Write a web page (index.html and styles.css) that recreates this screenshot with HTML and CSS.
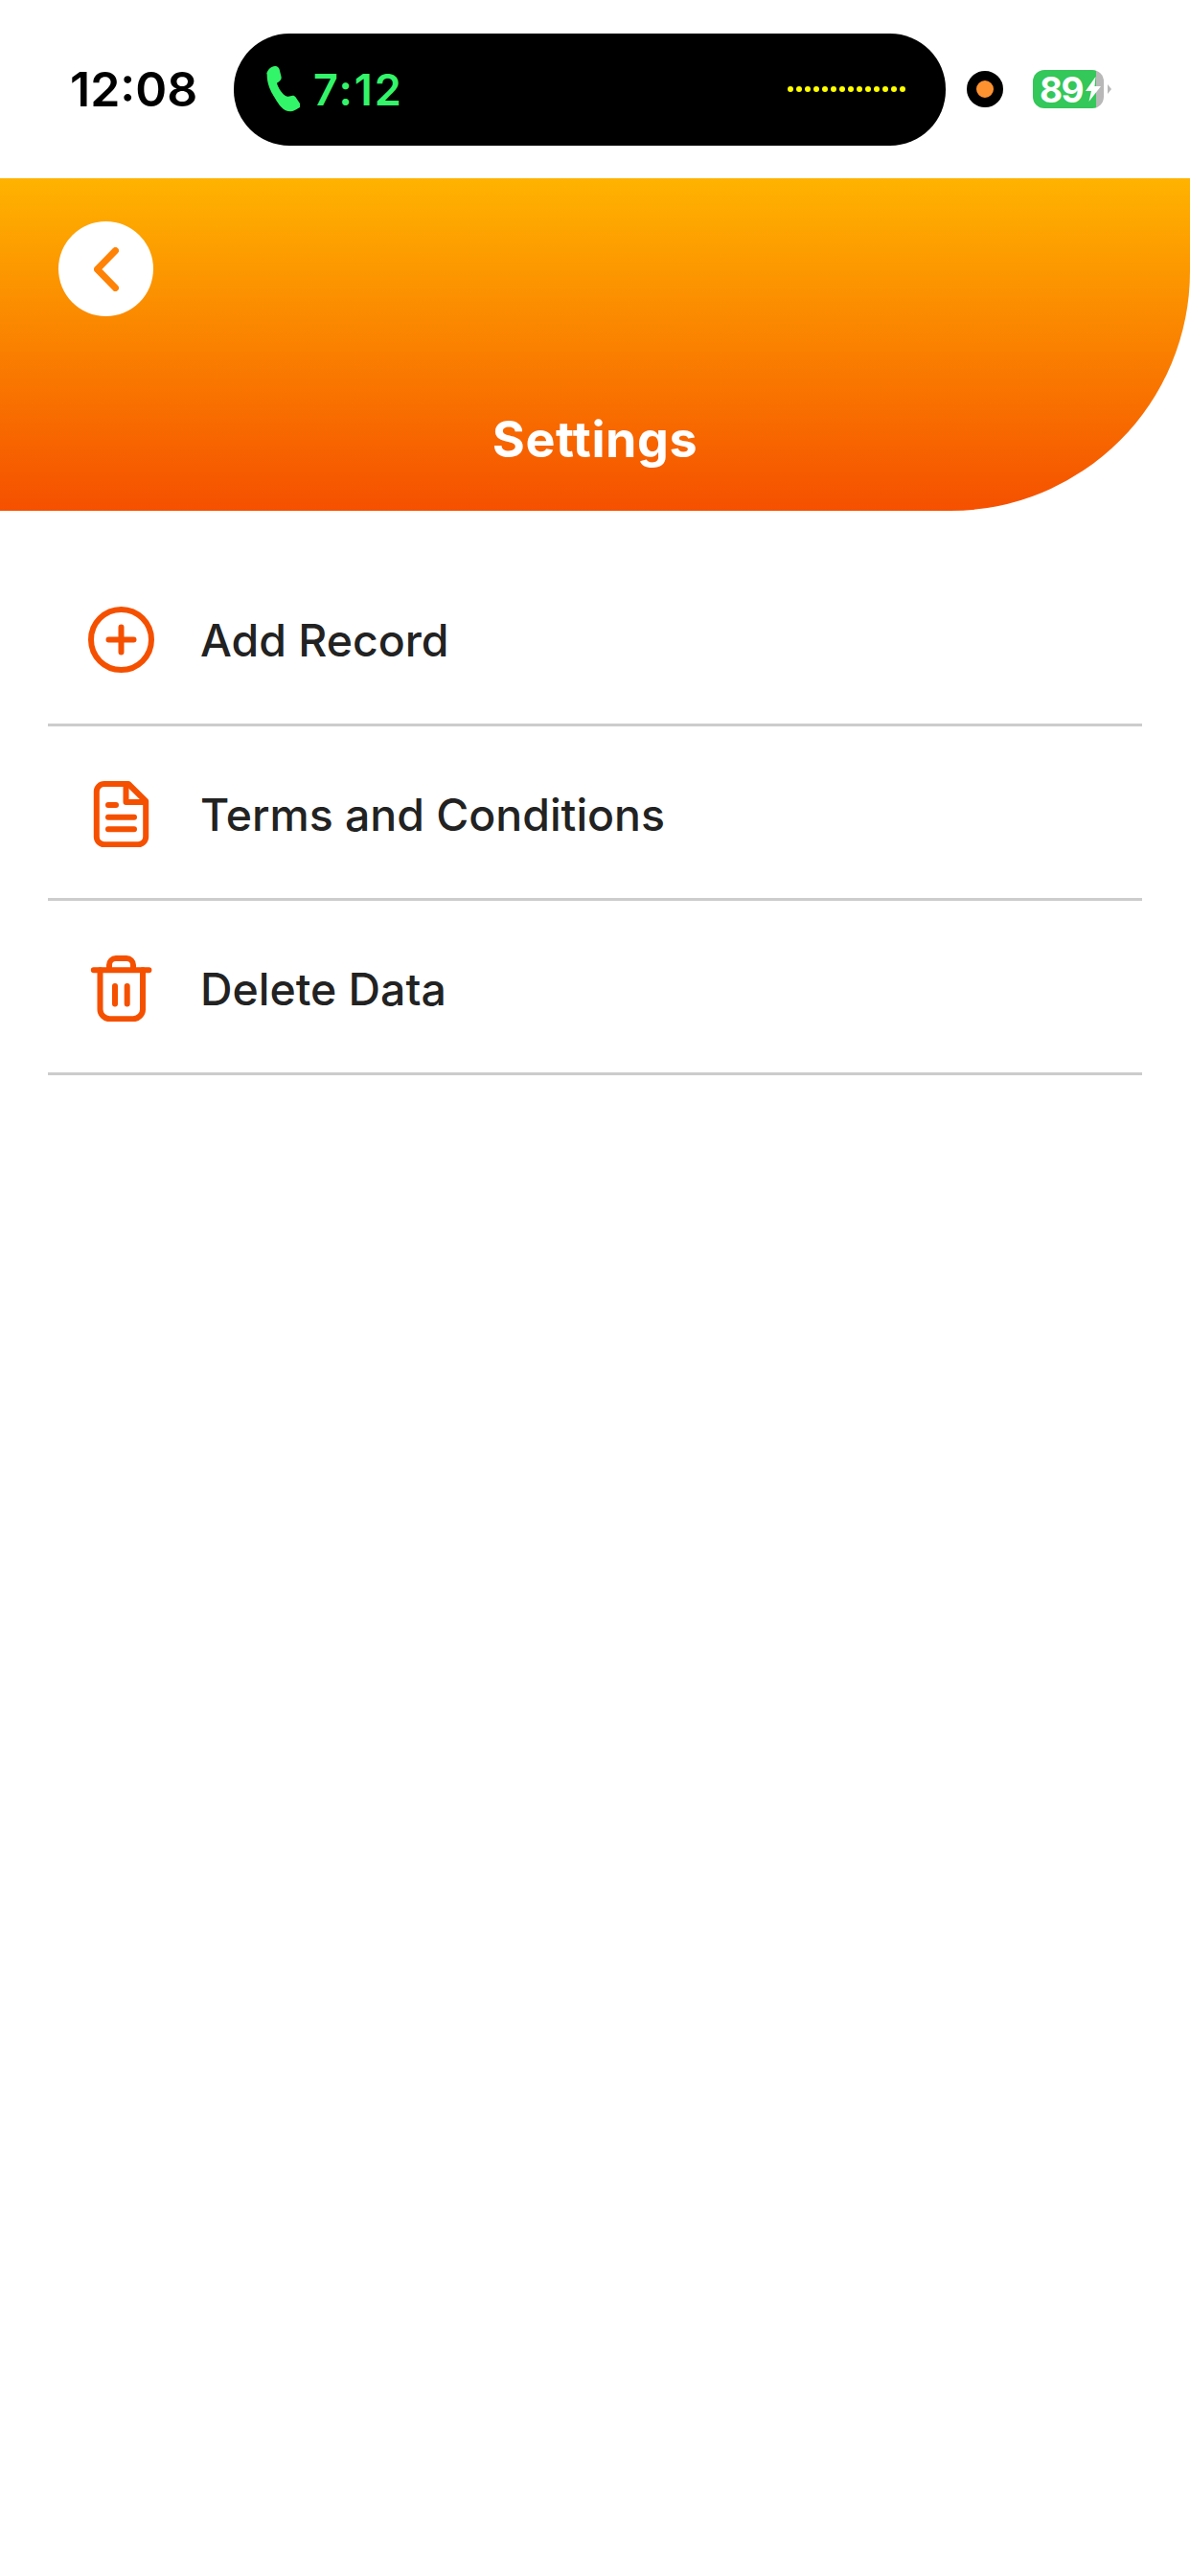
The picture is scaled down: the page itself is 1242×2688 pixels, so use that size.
FILE: index.html
```html
<!DOCTYPE html>
<html lang="en">
<head>
    <meta charset="UTF-8">
    <meta name="viewport" content="width=device-width, initial-scale=1.0">
    <title>Settings</title>
    <link rel="stylesheet" href="styles.css">
</head>
<body>

<div class="status-bar">
    <span class="clock">12:08</span>
    <div class="island">
        <svg class="call-icon" viewBox="0 0 36 48" width="36" height="48">
            <path d="M1.2 8.3C2 4 6 .2 9.9 0c2.300-.1 4 1 4.700 3.300l2 8c.4 2-.6 4.400-4.700 6.400 1.300 4 3.400 7.800 5.900 10.600 2 2.300 3.900 3.500 6 3.400 1.700-.1 3-.8 4.700-1 1.300-.1 2.200.5 3 1.600l4.600 6.800c1 1.700.7 3.600-1.900 5-2.600 1.700-5.400 3.200-8 3.200-3.500 0-6.900-1.600-9.900-4.900-4.200-4.700-8-12-9.900-15-2.300-4.800-5-11-4.700-19.100z" fill="#33f56a"/>
        </svg>
        <span class="call-time">7:12</span>
        <div class="dots">
            <i></i><i></i><i></i><i></i><i></i><i></i><i></i>
            <i></i><i></i><i></i><i></i><i></i><i></i><i></i>
        </div>
    </div>
    <div class="mic-dot"></div>
    <div class="battery">
        <span>89</span>
        <svg class="bolt" viewBox="0 0 16 26" width="16" height="26">
            <path d="M10.500 0L0 15h6L3.500 26 16 10H9.500z" fill="#fff"/>
        </svg>
    </div>
</div>

<header class="top-header">
    <button class="back-btn" type="button">
        <svg viewBox="0 0 26 46" width="26" height="46">
            <path d="M22.500 3.500L3.500 23l19 19.500" fill="none" stroke="#ff8205" stroke-width="7" stroke-linecap="round" stroke-linejoin="round"/>
        </svg>
    </button>
    <h1>Settings</h1>
</header>

<main>
    <ul class="menu">
        <li class="menu-item">
            <svg class="menu-icon" viewBox="0 0 69 69">
                <circle cx="34.500" cy="34.500" r="31.500"/>
                <path d="M34.500 21.500v26M21.500 34.500h26"/>
            </svg>
            <span>Add Record</span>
        </li>
        <li class="menu-item">
            <svg class="menu-icon" viewBox="0 0 69 69">
                <path d="M42 3H16.800a8 8 0 0 0-8 8v47.300a8 8 0 0 0 8 8h35.400a8 8 0 0 0 8-8V21z"/>
                <path d="M39.500 4v18h20M21 25h8M21 37.700h27M21 50.300h27"/>
            </svg>
            <span>Terms and Conditions</span>
        </li>
        <li class="menu-item">
            <svg class="menu-icon" viewBox="0 0 69 69">
                <path d="M5.800 15.300h57.600M22 15V10a7 7 0 0 1 7-7h11a7 7 0 0 1 7 7v5"/>
                <path d="M12.500 15.300V56a10 10 0 0 0 10 10.200H47A10 10 0 0 0 57 56V15.300M28 32v18.500M40.700 32v18.500"/>
            </svg>
            <span>Delete Data</span>
        </li>
    </ul>
</main>

</body>
</html>
```

FILE: styles.css
```css
body {
    font-family: Inter, "Liberation Sans", sans-serif;
    background-color: #fff;
    color: #222;
    margin: 0;
    min-height: 2688px;
}

/* phone status bar */
.status-bar {
    display: flex;
    align-items: center;
    height: 186px;
    padding-left: 73px;
}

.clock {
    width: 170.5px;
    font-size: 50px;
    font-weight: 600;
    color: #000;
}

.island {
    display: flex;
    align-items: center;
    width: 743.5px;
    height: 117px;
    padding: 0 42px 0 33.5px;
    box-sizing: border-box;
    border-radius: 58px;
    background-color: #000;
}

.call-icon {
    flex: none;
    margin-right: 14px;
}

.call-time {
    font-size: 45px;
    font-weight: 600;
    letter-spacing: 2px;
    color: #33f56a;
}

.dots {
    display: flex;
    gap: 3px;
    margin-left: auto;
}

.dots i {
    width: 6px;
    height: 6px;
    border-radius: 50%;
    background-color: #ff0;
}

.mic-dot {
    width: 18px;
    height: 18px;
    margin-left: 22px;
    border: 10px solid #000;
    border-radius: 50%;
    background-color: #ff9230;
}

.battery {
    position: relative;
    display: flex;
    align-items: center;
    width: 74px;
    height: 40px;
    margin-left: 31px;
    padding-left: 7px;
    box-sizing: border-box;
    border-radius: 12px;
    background: linear-gradient(to right, #34c759 66px, #b8b8b8 66px);
    font-size: 37px;
    font-weight: 700;
    letter-spacing: -1.5px;
    color: #fff;
}

/* battery terminal */
.battery::after {
    content: "";
    position: absolute;
    left: 78px;
    top: 15px;
    border-left: 4px solid #b8b8b8;
    border-top: 5px solid transparent;
    border-bottom: 5px solid transparent;
}

.bolt {
    flex: none;
    margin-left: 3px;
}

/* orange header */
.top-header {
    height: 347px;
    padding: 45px 0 0 61px;
    box-sizing: border-box;
    background: linear-gradient(to bottom, #ffb300, #f55000);
    border-bottom-right-radius: 250px;
}

.back-btn {
    display: flex;
    align-items: center;
    justify-content: center;
    width: 99px;
    height: 99px;
    padding: 0;
    border: none;
    border-radius: 50%;
    background-color: #fff;
}

.top-header h1 {
    margin: 99px 0 0 -61px;
    font-size: 52px;
    font-weight: 700;
    letter-spacing: 0.6px;
    line-height: 60px;
    text-align: center;
    color: #fff;
}

/* settings list */
.menu {
    list-style: none;
    margin: 43px 50px 0;
    padding: 0;
}

.menu-item {
    display: flex;
    align-items: center;
    gap: 48px;
    height: 182px;
    padding: 4px 0 0 42px;
    box-sizing: border-box;
    border-bottom: 3px solid #ccc;
    font-size: 46.4px;
    font-weight: 500;
}

.menu-icon {
    flex: none;
    width: 69px;
    height: 69px;
    fill: none;
    stroke: #f55000;
    stroke-width: 6;
    stroke-linecap: round;
    stroke-linejoin: round;
}
```
